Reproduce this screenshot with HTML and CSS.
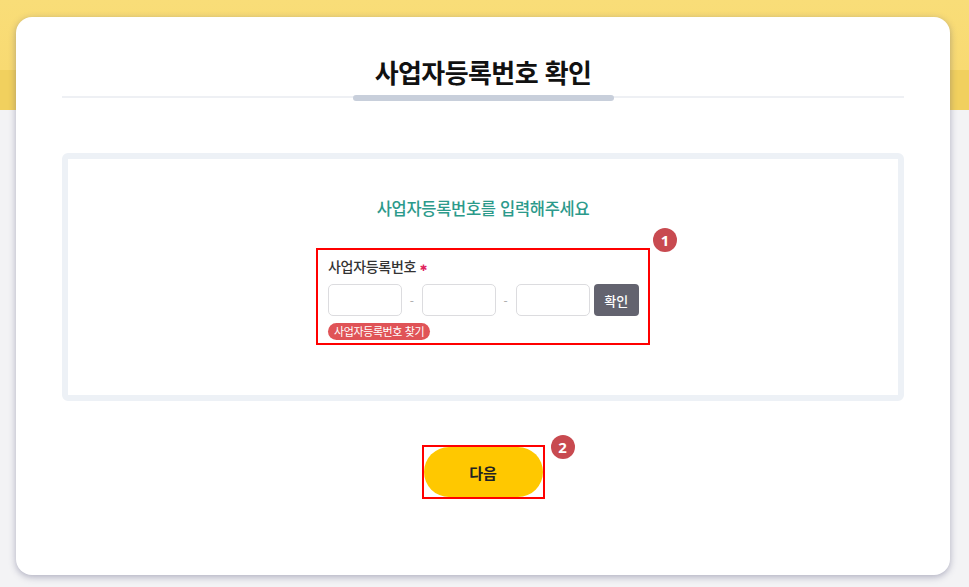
FILE: index.html
```html
<!DOCTYPE html>
<html lang="ko">
<head>
<meta charset="utf-8">
<title>사업자등록번호 확인</title>
<link rel="stylesheet" href="styles.css">
</head>
<body>
<div class="page">
  <div class="card">
    <div class="header">
      <h1 class="title">사업자등록번호 확인</h1>
    </div>
    <div class="panel">
      <p class="subtitle">사업자등록번호를 입력해주세요</p>
      <div class="form-group mark">
        <span class="badge badge-1">1</span>
        <div class="label">사업자등록번호 <span class="req">✱</span></div>
        <div class="row">
          <input class="field" type="text">
          <span class="dash">-</span>
          <input class="field" type="text">
          <span class="dash">-</span>
          <input class="field" type="text">
          <button class="check" type="button">확인</button>
        </div>
        <span class="find">사업자등록번호 찾기</span>
      </div>
    </div>
    <div class="actions">
      <div class="next-wrap mark">
        <span class="badge badge-2">2</span>
        <button class="next" type="button">다음</button>
      </div>
    </div>
  </div>
</div>
</body>
</html>
```

FILE: styles.css
```css
* { box-sizing: border-box; }
html, body { margin: 0; padding: 0; }
body {
  width: 969px;
  height: 587px;
  overflow: hidden;
  font-family: "Noto Sans CJK KR", "Noto Sans", sans-serif;
  background: linear-gradient(#f9dd78 0, #f8da72 70px, #f1d05e 70px, #f1d05e 110px, #f3f3f5 110px);
}
.page {
  padding: 17px 19px 12px 16px;
}
.card {
  width: 934px;
  height: 558px;
  background: #fff;
  border-radius: 16px;
  box-shadow: 0 2px 7px rgba(70, 70, 110, 0.4);
  padding: 0 46px;
}
.header {
  position: relative;
  padding-top: 37px;
  border-bottom: 2px solid #eef0f4;
  text-align: center;
}
.header::after {
  content: "";
  position: absolute;
  left: 50%;
  bottom: -5px;
  width: 261px;
  height: 6px;
  margin-left: -130px;
  background: #c8cfdb;
  border-radius: 3px;
}
.title {
  margin: 0 0 6px;
  font-size: 26px;
  line-height: 36px;
  font-weight: 700;
  color: #111;
  letter-spacing: -0.6px;
}
.panel {
  margin-top: 55px;
  height: 248px;
  border: 6px solid #edf1f6;
  border-radius: 6px;
  padding-top: 37px;
  display: flex;
  flex-direction: column;
  align-items: center;
}
.subtitle {
  margin: 0;
  font-size: 16.5px;
  line-height: 24px;
  font-weight: 500;
  color: #2c9a8b;
  letter-spacing: -0.3px;
}
.mark {
  position: relative;
  border: 2px solid #f00;
}
.form-group {
  margin-top: 28px;
  width: 334px;
  height: 97px;
  padding: 6px 9px 0 10px;
}
.label {
  font-size: 14px;
  line-height: 20px;
  font-weight: 500;
  color: #333;
  letter-spacing: -0.3px;
}
.req {
  color: #e0245e;
  font-size: 9px;
  font-family: "DejaVu Sans", sans-serif;
  vertical-align: 1px;
}
.row {
  margin-top: 6px;
  display: flex;
  align-items: center;
}
.field {
  width: 74px;
  height: 32px;
  margin: 0;
  padding: 0 6px;
  border: 1px solid #dcdcdf;
  border-radius: 5px;
  background: #fff;
  font: inherit;
}
.dash {
  width: 20px;
  text-align: center;
  font-size: 12px;
  color: #aaa;
}
.check {
  margin-left: 4px;
  width: 46px;
  height: 32px;
  border: 0;
  border-radius: 4px;
  background: #63636f;
  color: #fff;
  font-family: inherit;
  font-size: 13px;
  font-weight: 500;
  padding: 0;
}
.find {
  display: inline-block;
  margin-top: 7px;
  height: 17px;
  padding: 0 6px;
  border-radius: 9px;
  background: #e05357;
  color: #fff;
  font-size: 11px;
  line-height: 17px;
  letter-spacing: -0.4px;
}
.badge {
  position: absolute;
  width: 24px;
  height: 24px;
  border-radius: 50%;
  background: #c84a50;
  color: #fff;
  font-size: 15px;
  font-weight: 700;
  line-height: 24px;
  text-align: center;
  font-family: "Noto Sans", sans-serif;
}
.badge-1 { right: -29px; top: -22px; }
.badge-2 { right: -32px; top: -12px; }
.actions {
  margin-top: 44px;
  display: flex;
  justify-content: center;
}
.next-wrap {
  padding: 0;
  width: 123px;
  height: 54px;
  display: flex;
  align-items: center;
  justify-content: center;
}
.next {
  width: 120px;
  height: 50px;
  border: 0;
  border-radius: 25px;
  background: #ffc800;
  color: #222;
  font-family: inherit;
  font-size: 15px;
  font-weight: 700;
  padding: 0;
}
```
